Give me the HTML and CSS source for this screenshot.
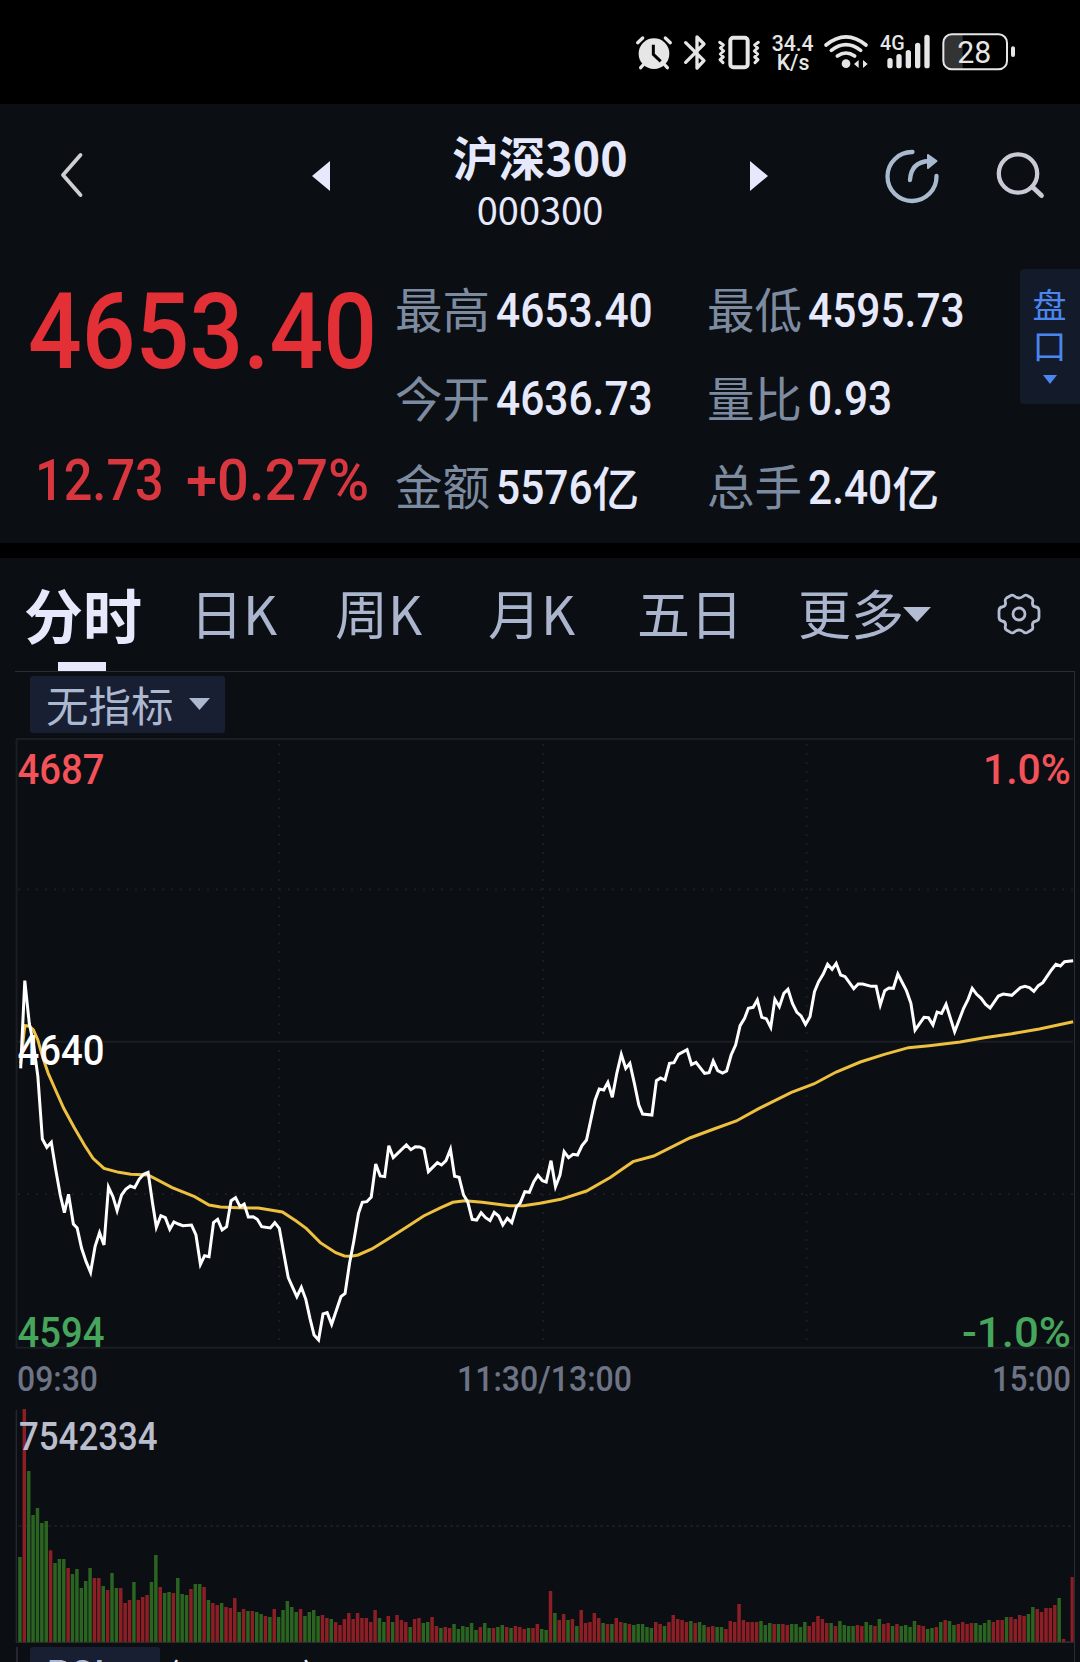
FILE: index.html
```html
<!doctype html>
<html lang="zh-CN">

<head>
    <meta charset="utf-8" />
    <meta name="viewport" content="width=device-width, initial-scale=1.0" />
    <title>沪深300 000300</title>
    <link rel="stylesheet" href="styles.css">
</head>

<body>
    <div class="status-bar">
        <!-- alarm -->
        <svg class="status-icon" width="43" height="70" viewBox="45 0 129 210">
            <circle cx="102" cy="101" r="46" fill="#e6e6e6" />
            <path d="M53 68L68 54M151 68L136 54M72 132L62 143M132 132L142 143" stroke="#e6e6e6" stroke-width="10" stroke-linecap="round" />
            <path d="M100 74V103L122 124" fill="none" stroke="#000" stroke-width="9" />
        </svg>
        <!-- bluetooth -->
        <svg class="status-icon" width="34" height="70" viewBox="174 0 102 210">
            <path d="M197 68L252 122L231 144V51L252 72L197 127" fill="none" stroke="#e6e6e6" stroke-width="10" stroke-linejoin="round" stroke-linecap="round" />
        </svg>
        <!-- vibrate -->
        <svg class="status-icon" width="55" height="70" viewBox="276 0 165 210">
            <rect x="331" y="53" width="52" height="89" rx="9" fill="none" stroke="#e6e6e6" stroke-width="12" />
            <path d="M299 67L310 75L301 84L311 93L301 102L310 111L300 119L309 128M415 67L404 75L413 84L403 93L413 102L404 111L414 119L405 128" fill="none" stroke="#e6e6e6" stroke-width="9" stroke-linejoin="round" stroke-linecap="round" />
        </svg>
        <!-- network speed -->
        <svg class="status-icon" width="54" height="70" viewBox="441 0 162 210">
            <text x="455" y="92" class="net-speed" textLength="126" lengthAdjust="spacingAndGlyphs">34.4</text>
            <text x="470" y="149" class="net-speed" textLength="98" lengthAdjust="spacingAndGlyphs">K/s</text>
        </svg>
        <!-- wifi -->
        <svg class="status-icon" width="54" height="70" viewBox="603 0 162 210">
            <path d="M618 75Q678 26 738 75M634 91Q678 57 722 91M652 108Q678 90 704 108" fill="none" stroke="#e6e6e6" stroke-width="11" stroke-linecap="round" />
            <circle cx="678" cy="131" r="13" fill="#e6e6e6" />
            <path d="M702 132L716 120V144M743 132L729 120V144" fill="#e6e6e6" />
        </svg>
        <!-- mobile signal -->
        <svg class="status-icon" width="60" height="70" viewBox="765 0 180 210">
            <text x="780" y="91" class="signal-type" textLength="74" lengthAdjust="spacingAndGlyphs">4G</text>
            <path d="M810 122V137M837 110V137M865 98V137M893 76V137M921 52V137" stroke="#e6e6e6" stroke-width="16" stroke-linecap="round" />
        </svg>
        <!-- battery -->
        <svg class="status-icon" width="85" height="70" viewBox="945 0 255 210">
            <path d="M990 44H1028V147H990Q971 147 971 125V66Q971 44 990 44Z" fill="#333" />
            <rect x="970" y="43" width="191" height="105" rx="25" fill="none" stroke="#e6e6e6" stroke-width="6" />
            <rect x="1173" y="79" width="12" height="32" rx="6" fill="#e6e6e6" />
            <text x="1012" y="129" class="battery-level" textLength="102" lengthAdjust="spacingAndGlyphs">28</text>
        </svg>
    </div>

    <header class="title-bar">
        <svg class="back" width="24" height="46" viewBox="0 0 24 46">
            <path d="M20.500 3L3 23L20.500 43" fill="none" stroke="#cfcfd2" stroke-width="3.800" stroke-linecap="round" stroke-linejoin="round" />
        </svg>
        <svg class="prev" width="18" height="30" viewBox="0 0 18 30">
            <path d="M18 0V30L0 15Z" fill="#e6e9fb" />
        </svg>
        <div class="stock-name">
            <h1>沪深300</h1>
            <p>000300</p>
        </div>
        <svg class="next" width="18" height="30" viewBox="0 0 18 30">
            <path d="M0 0V30L18 15Z" fill="#e6e9fb" />
        </svg>
        <svg class="share" width="56" height="56" viewBox="0 0 56 56">
            <path d="M28.500 4A24.500 24.500 0 1 0 52.500 28" fill="none" stroke="#a9b9cf" stroke-width="4.300" stroke-linecap="round" />
            <path d="M26 32Q27 14 45 13" fill="none" stroke="#a9b9cf" stroke-width="4.300" stroke-linecap="round" />
            <path d="M44 7L52.500 13L44 20Z" fill="#a9b9cf" stroke="#a9b9cf" stroke-width="2" stroke-linejoin="round" />
        </svg>
        <svg class="search" width="50" height="48" viewBox="0 0 50 48">
            <circle cx="22" cy="22.500" r="19.200" fill="none" stroke="#c9cad6" stroke-width="4.300" />
            <path d="M36.500 36L45.500 44.500" stroke="#c9cad6" stroke-width="4.800" stroke-linecap="round" />
        </svg>
    </header>

    <section class="quote">
        <div class="price">
            <div class="last"><span class="num">4653.40</span></div>
            <div class="change">
                <span class="num amount">12.73</span>
                <span class="num percent">+0.27%</span>
            </div>
        </div>
        <div class="stats">
            <div class="stat"><label>最高</label><b class="num">4653.40</b></div>
            <div class="stat"><label>最低</label><b class="num">4595.73</b></div>
            <div class="stat"><label>今开</label><b class="num">4636.73</b></div>
            <div class="stat"><label>量比</label><b class="num">0.93</b></div>
            <div class="stat"><label>金额</label><b class="num">5576</b><i class="unit u4">亿</i></div>
            <div class="stat"><label>总手</label><b class="num">2.40</b><i class="unit u3">亿</i></div>
        </div>
        <div class="pankou">
            <span>盘</span>
            <span>口</span>
            <svg width="14" height="9" viewBox="0 0 14 9"><path d="M0 0H14L7 9Z" fill="#4b86f0" /></svg>
        </div>
    </section>

    <nav class="tabs">
        <a class="tab active">分时</a>
        <a class="tab day">日K</a>
        <a class="tab week">周K</a>
        <a class="tab month">月K</a>
        <a class="tab five">五日</a>
        <a class="tab more">更多</a>
        <svg class="more-arrow" width="28" height="15" viewBox="0 0 28 15"><path d="M0 0H28L14 15Z" fill="#b4bdd2" /></svg>
        <svg class="gear" width="44" height="44" viewBox="-22 -22 44 44">
            <path d="M-4 -17.500Q0 -14.500 4 -17.500Q6.500 -20 9 -18L12.500 -16Q14.500 -14.500 13.500 -11.500Q13 -7.500 17 -7Q20 -6.500 20 -3V3Q20 6.500 17 7Q13 7.500 13.500 11.500Q14.500 14.500 12.500 16L9 18Q6.500 20 4 17.500Q0 14.500 -4 17.500Q-6.500 20 -9 18L-12.500 16Q-14.500 14.500 -13.500 11.500Q-13 7.500 -17 7Q-20 6.500 -20 3V-3Q-20 -6.500 -17 -7Q-13 -7.500 -13.500 -11.500Q-14.500 -14.500 -12.500 -16L-9 -18Q-6.500 -20 -4 -17.500Z" fill="none" stroke="#b4bdd2" stroke-width="2.800" />
            <circle r="6" fill="none" stroke="#b4bdd2" stroke-width="2.800" />
        </svg>
    </nav>

    <main class="chart-panel">
        <div class="indicator-row">
            <div class="indicator">
                <span>无指标</span>
                <svg width="21" height="12" viewBox="0 0 21 12"><path d="M0 0H21L10.500 12Z" fill="#abb8d0" /></svg>
            </div>
        </div>

        <!-- price chart, y axis starts at 738 -->
        <svg class="price-chart" width="1080" height="662" viewBox="0 738 1080 662">
            <g class="grid">
                <path d="M16 739H1073M16 1041.700H1073M16 1347.700H1073M16.500 739V1348" />
                <path class="dotted" d="M18 889.500H1073M18 1194H1073M279 744V1346M543 744V1346M806.500 744V1346" />
            </g>
            <g class="lines" transform="translate(0 940) scale(.34439 .33333)">
                <polyline id="avgLine" stroke="#eec03f" />
                <polyline id="priceLine" stroke="#fff" />
            </g>
            <g class="levels">
                <text x="17.500" y="783.500" fill="#f25258" textLength="87">4687</text>
                <text x="983" y="783.500" fill="#f25258" textLength="88">1.0%</text>
                <text x="17.500" y="1065" fill="#fff" textLength="87">4640</text>
                <text x="17.500" y="1346.500" fill="#45a65c" textLength="87">4594</text>
                <text x="962" y="1346.500" fill="#45a65c" textLength="109">-1.0%</text>
            </g>
            <g class="times">
                <text x="17" y="1391" textLength="81">09:30</text>
                <text x="457" y="1391" textLength="175">11:30/13:00</text>
                <text x="992" y="1391" textLength="79">15:00</text>
            </g>
        </svg>

        <!-- volume chart, three units per pixel -->
        <svg class="volume-chart" width="1080" height="247" viewBox="0 30 3240 741">
            <path d="M49 60V756" stroke="#24272f" stroke-width="4" />
            <path d="M55 408H3215" stroke="#20242a" stroke-width="4" stroke-dasharray="8 10" />
            <g id="bars"></g>
            <path d="M48 757H3220" stroke="#30302f" stroke-width="3" />
            <text class="volume-max" x="57" y="181" textLength="416" lengthAdjust="spacingAndGlyphs">7542334</text>
        </svg>

        <div class="rsi-row">
            <div class="rsi-name">RSI</div>
            <div class="rsi-params">(6,12,24)</div>
        </div>
    </main>

    <script src="chart.js"></script>
</body>

</html>
```

FILE: styles.css
```css
* {
    box-sizing: border-box;
}

body {
    margin: 0;
    width: 1080px;
    height: 1662px;
    overflow: hidden;
    background: #0b0e13;
    color: #e6e9fb;
    font-family: "Noto Sans CJK SC", sans-serif;
}

h1,
p {
    margin: 0;
}

svg {
    display: block;
    flex: none;
}

/* Narrow digits */
.num {
    display: inline-block;
    font-family: Roboto, sans-serif;
    font-weight: 500;
    transform: scaleX(0.885);
    transform-origin: left center;
    white-space: pre;
}

/* Status bar */
.status-bar {
    display: flex;
    height: 104px;
    padding: 20px 0 0 635px;
    background: #000;
}

.net-speed {
    font: 500 66px Roboto, sans-serif;
    fill: #e6e6e6;
}

.signal-type {
    font: 500 60px Roboto, sans-serif;
    fill: #e6e6e6;
}

.battery-level {
    font: 400 96px Roboto, sans-serif;
    fill: #e6e6e6;
}

/* Title */
.title-bar {
    display: flex;
    height: 155px;
    padding-left: 60px;
}

.back {
    margin-top: 48px;
}

.prev {
    margin: 57px 0 0 228px;
}

.stock-name {
    width: 310px;
    margin: 0 55px;
    padding-top: 24px;
    text-align: center;
}

.stock-name h1 {
    font-size: 46.500px;
    font-weight: 700;
    line-height: 56px;
}

.stock-name p {
    margin-top: 2px;
    font-size: 38px;
    line-height: 45px;
}

.next {
    margin-top: 57px;
}

.share {
    margin: 44px 0 0 116px;
}

.search {
    margin: 47px 0 0 56px;
}

/* Quote */
.quote {
    display: flex;
    height: 284px;
}

.price {
    width: 396px;
    padding-left: 28px;
    color: #e32f36;
    white-space: nowrap;
}

.last {
    height: 124px;
    margin-top: -1px;
    font-size: 106px;
    line-height: 128px;
}

.last .num {
    transform: scaleX(0.893);
}

.change {
    display: flex;
    margin-top: 63px;
    padding-left: 7px;
    color: #d8373f;
    font-size: 58px;
    line-height: 70px;
}

.change .amount {
    width: 151px;
    transform: scaleX(0.87);
}

.change .percent {
    transform: scaleX(0.965);
}

.stats {
    display: grid;
    grid-template-columns: 312px 312px;
    grid-template-rows: repeat(3, 88.500px);
    padding-top: 7px;
}

.stat {
    display: flex;
    align-items: center;
    white-space: nowrap;
}

.stat label {
    width: 100px;
    margin: -2px 1px 2px -1px;
    color: #7d8ba0;
    font-size: 47.500px;
    line-height: 60px;
}

.stat .num {
    padding-top: 1px;
    font-size: 48px;
    line-height: 60px;
}

.unit {
    margin-bottom: 3px;
    font-size: 47px;
    font-style: normal;
    font-weight: 500;
    line-height: 60px;
}

.u4 {
    margin-left: -13px;
}

.u3 {
    margin-left: -11px;
}

.pankou {
    display: flex;
    flex-direction: column;
    align-items: center;
    width: 60px;
    height: 135px;
    margin-top: 10px;
    padding: 14px 1px 0 0;
    border-radius: 4px 0 0 4px;
    background: #131b2b;
    color: #4b86f0;
    font-size: 34px;
    line-height: 41px;
}

.pankou svg {
    margin-top: 10px;
}

/* Period tabs */
.tabs {
    display: flex;
    height: 128px;
    padding-left: 24px;
    border-top: 15px solid #000;
}

.tab {
    flex: none;
    height: 113px;
    color: #abb6ce;
    font-size: 53px;
    line-height: 109px;
    white-space: nowrap;
}

.tab.active {
    position: relative;
    width: 166px;
    color: #e6e9fb;
    font-size: 59px;
    font-weight: 700;
    line-height: 111px;
}

.tab.active::after {
    content: "";
    position: absolute;
    left: 34px;
    bottom: 0;
    width: 48px;
    height: 9px;
    background: #e6e9fb;
}

.day {
    width: 145px;
}

.week {
    width: 153px;
}

.month {
    width: 149px;
}

.five {
    width: 161px;
}

.more {
    width: 105px;
}

.more-arrow {
    margin-top: 49px;
}

.gear {
    margin: 34px 0 0 66px;
}

/* Charts */
.chart-panel {
    position: relative;
    height: 991px;
}

/* frame above and to the right of both charts */
.chart-panel::before {
    content: "";
    position: absolute;
    top: 0;
    left: 15px;
    width: 1059px;
    height: 991px;
    border-top: 1px solid #2a2d33;
    border-right: 1px solid #2a2d33;
}

.indicator-row {
    height: 67px;
    padding: 5px 0 0 30px;
}

.indicator {
    display: flex;
    align-items: center;
    gap: 15px;
    width: 195px;
    height: 57px;
    padding: 0 0 2px 16px;
    border-radius: 3px;
    background: #181f33;
    color: #abb8d0;
    font-size: 42.500px;
    line-height: 55px;
    white-space: nowrap;
}

.grid path {
    fill: none;
    stroke: #1a1d23;
    stroke-width: 2;
}

.grid .dotted {
    stroke-dasharray: 2 7;
}

.lines polyline {
    fill: none;
    stroke-width: 3;
    vector-effect: non-scaling-stroke;
}

.levels {
    font: 500 43px Roboto, sans-serif;
}

.times {
    fill: #6d7485;
    font: 500 35px Roboto, sans-serif;
}

.volume-max {
    fill: #b9bdcc;
    font: 500 119px Roboto, sans-serif;
}

.rsi-row {
    display: flex;
    height: 15px;
    margin-left: 16px;
    padding-left: 12px;
    border-left: 2px solid #24272f;
    overflow: hidden;
    font-size: 38px;
    line-height: 44px;
}

.rsi-name {
    width: 130px;
    height: 50px;
    padding: 3px 0 0 16px;
    border-radius: 3px;
    background: #181f33;
    color: #abb8d0;
    font-weight: 500;
}

.rsi-params {
    padding: 5px 0 0 7px;
    font-size: 37px;
}
```

FILE: chart.js
```js
const price = `60,385 72,122 85,250 97,310 110,410 123,597 136,622 149,607 162,690 175,765 187,818 199,763 213,852 224,864
237,925 250,965 263,997 276,920 289,878 302,915 315,741 328,770 340,812 353,765 365,748 378,738 391,743 404,718 417,703
430,697 443,790 454,862 467,827 480,833 493,868 505,846 518,852 531,857 556,855 569,885 582,973 594,947 607,950 620,848
632,838 645,870 658,860 671,782 684,773 697,800 709,792 721,831 735,830 747,838 760,860 785,864 798,848 811,865 824,940
837,1013 850,1043 862,1070 875,1042 888,1078 900,1135 912,1185 925,1200 938,1122 950,1118 963,1153 977,1110 990,1070
1002,1060 1015,970 1027,905 1041,820 1052,787 1065,785 1078,771 1091,672 1104,708 1117,710 1129,617 1142,653 1180,615
1193,629 1206,620 1219,621 1231,627 1244,695 1270,668 1282,675 1295,662 1308,628 1320,709 1333,712 1346,765 1358,785
1371,838 1384,840 1397,818 1410,833 1423,842 1435,817 1448,828 1460,855 1473,835 1486,848 1500,800 1511,788 1524,755
1537,757 1550,725 1562,706 1575,722 1586,726 1600,662 1613,740 1626,705 1638,635 1651,653 1664,643 1677,645 1690,617
1703,600 1728,480 1740,447 1753,450 1765,427 1778,472 1791,400 1804,343 1817,385 1829,370 1842,430 1855,495 1866,522
1893,525 1906,422 1918,414 1931,420 1944,370 1957,368 1970,343 1995,329 2008,374 2021,367 2046,400 2059,398 2071,363
2084,392 2098,399 2110,393 2123,345 2136,315 2149,257 2162,235 2173,205 2187,202 2199,180 2212,232 2225,236 2238,262
2250,178 2263,200 2276,160 2288,148 2301,190 2314,217 2326,228 2339,253 2352,230 2365,155 2377,125 2390,103 2403,73
2416,88 2428,70 2441,105 2454,110 2479,146 2492,132 2505,132 2530,139 2544,139 2556,195 2569,152 2581,144 2594,145
2607,102 2632,152 2645,190 2657,270 2683,232 2696,233 2709,255 2721,216 2734,220 2747,193 2772,275 2798,205 2811,178
2823,145 2836,163 2849,175 2862,193 2875,204 2899,168 2913,162 2938,166 2963,143 2976,139 2989,143 3002,154 3015,137
3028,128 3053,90 3066,73 3079,78 3091,65 3116,62`;

const average = `60,370 72,257 85,258 97,270 110,300 125,355 140,400 160,447 185,505 215,562 245,615 270,655 302,685 345,697
380,703 430,705 500,743 565,770 607,795 640,801 690,803 750,804 820,816 860,843 890,866 930,908 975,938 1000,948 1020,949
1040,945 1080,927 1130,895 1180,862 1230,828 1280,803 1315,787 1350,782 1400,787 1480,797 1520,797 1568,790 1628,778
1703,753 1773,712 1803,690 1838,665 1898,648 2003,594 2073,567 2138,543 2203,506 2298,457 2363,432 2428,396 2498,366
2568,343 2638,323 2698,317 2788,306 2858,293 2938,281 3018,267 3116,245`;

// one bar per minute: direction and top edge
const volume = `g501 r57 g243 g375 g354 g399 g393 r481 g519 g507 g507 r534 g552 g537 g594 g573 g534 r564 r564 g588
r600 g549 g594 r594 r639 r630 g576 r630 r621 r615 g576 g495 r591 g609 g606 r609 g564 g612 g615 r597
g582 g582 r591 g630 r639 r645 g639 r651 r654 r624 g666 r657 g663 r663 g666 g672 r678 g681 r657 g681
g660 g633 g651 g666 r657 g678 g666 g660 g678 r675 r684 g687 r696 r705 r687 r669 r687 r669 r684 r684
r696 r660 g684 g696 r678 g696 r675 r690 r696 g711 r687 r684 g699 g696 r681 r708 g714 r711 r714 g702
g717 g708 g711 g699 g720 r711 g699 g714 r714 g711 g705 r711 g714 r708 r711 r717 g714 r714 r702 g717
g720 r603 g669 r690 r672 g690 r687 g708 r660 r699 r696 r669 r684 g699 r702 g702 r684 r696 g699 r702
g705 g702 g702 g711 g714 r696 r702 g708 r696 r675 r687 r690 r696 g693 r699 g696 g705 r711 r708 g711
g711 r717 r693 r696 r642 r690 r696 r696 r696 g693 g705 g699 r702 g702 r702 r705 g702 g702 g711 g696
r708 r696 r678 r687 r699 g699 r708 g693 g705 g708 g708 r705 r708 g696 g705 r708 g687 r702 r699 g708
r702 g708 g705 g711 g693 r705 r708 g717 g714 r711 g696 r690 g693 g705 r702 r696 r702 r699 g699 g705
g699 g690 r696 r690 r690 g681 r681 r687 r675 r678 g672 g651 r657 r666 r654 r654 r645 g624 r747 r754 r561`;

document.getElementById('priceLine').setAttribute('points', price);
document.getElementById('avgLine').setAttribute('points', average);

const bars = document.getElementById('bars');
volume.split(/\s+/).forEach((item, i) => {
    const top = Number(item.slice(1));
    const x = 54.5 + i * 13.155;
    const rect = document.createElementNS('http://www.w3.org/2000/svg', 'rect');
    rect.setAttribute('x', x);
    rect.setAttribute('y', top);
    rect.setAttribute('width', Math.min(10.5, 3221 - x));
    rect.setAttribute('height', 757 - top);
    rect.setAttribute('fill', item[0] === 'r' ? '#8c1f25' : '#2b6420');
    bars.appendChild(rect);
});

// squeeze the axis labels into their slots
document.querySelectorAll('.levels text, .times text').forEach((label) => {
    label.setAttribute('lengthAdjust', 'spacingAndGlyphs');
});
```
